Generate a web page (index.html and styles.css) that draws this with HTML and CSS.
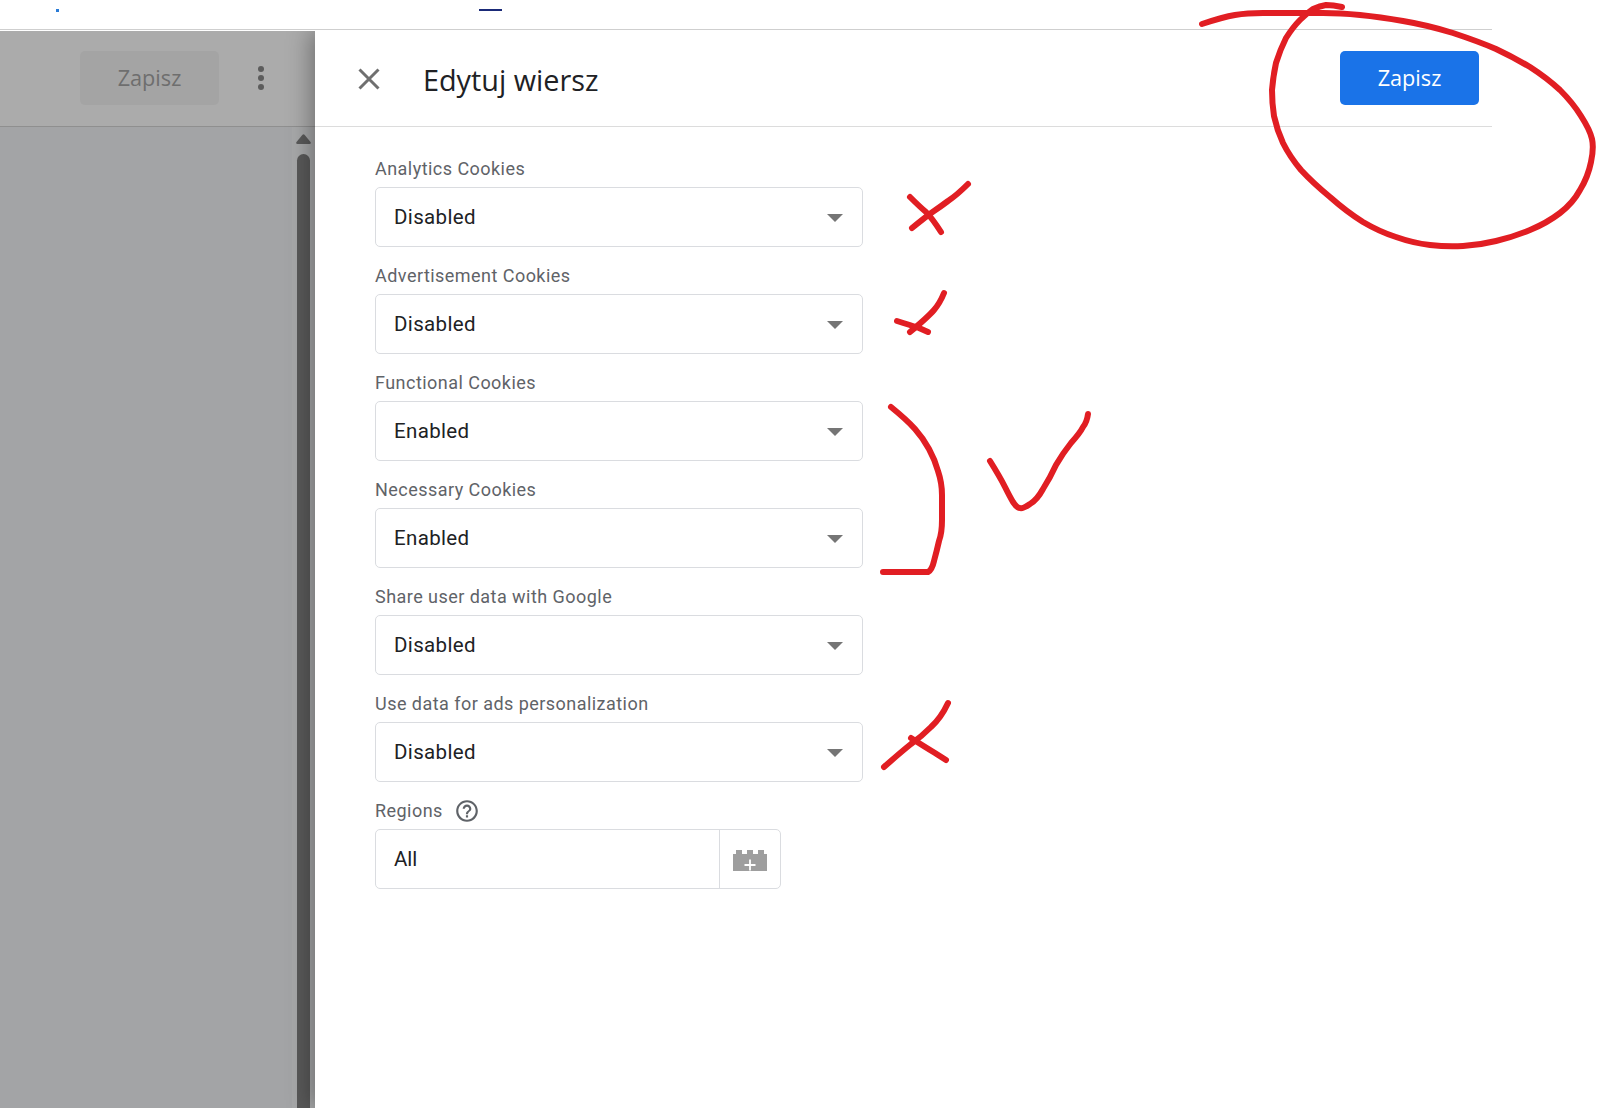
FILE: index.html
```html
<!DOCTYPE html>
<html lang="pl">
<head>
<meta charset="utf-8">
<title>Edytuj wiersz</title>
<link rel="stylesheet" href="styles.css">
</head>
<body>
<div class="page">
  <div class="topbar">
    <div class="topbar-inner">
      <span class="top-dot"></span>
      <span class="top-tab"></span>
    </div>
  </div>
  <div class="main">
    <div class="backdrop">
      <div class="backdrop-head">
        <div class="ghost-btn">Zapisz</div>
        <svg class="kebab" width="8" height="26" viewBox="0 0 8 26"><circle cx="4" cy="4" r="3" /><circle cx="4" cy="13" r="3" /><circle cx="4" cy="22" r="3" /></svg>
      </div>
      <div class="backdrop-body">
        <div class="scrollbar">
          <svg class="scroll-up" width="15" height="10" viewBox="0 0 15 10"><path d="M6.500 0.800 Q7.500 -0.200 8.500 0.800 L14.500 8 Q15.500 10 13.500 10 H1.500 Q-0.500 10 0.500 8 Z"/></svg>
          <div class="scroll-thumb"></div>
        </div>
      </div>
    </div>
    <div class="panel">
      <div class="panel-inner">
        <header class="panel-head">
          <svg class="close" width="22" height="22" viewBox="0 0 22 22"><path d="M1.500 1.500 L20.500 20.500 M20.500 1.500 L1.500 20.500"/></svg>
          <h1 class="title">Edytuj wiersz</h1>
          <button class="save-btn">Zapisz</button>
        </header>
        <div class="form">
          <div class="field">
            <div class="label">Analytics Cookies</div>
            <div class="select"><span>Disabled</span><i class="caret"></i></div>
          </div>
          <div class="field">
            <div class="label">Advertisement Cookies</div>
            <div class="select"><span>Disabled</span><i class="caret"></i></div>
          </div>
          <div class="field">
            <div class="label">Functional Cookies</div>
            <div class="select"><span>Enabled</span><i class="caret"></i></div>
          </div>
          <div class="field">
            <div class="label">Necessary Cookies</div>
            <div class="select"><span>Enabled</span><i class="caret"></i></div>
          </div>
          <div class="field">
            <div class="label">Share user data with Google</div>
            <div class="select"><span>Disabled</span><i class="caret"></i></div>
          </div>
          <div class="field">
            <div class="label">Use data for ads personalization</div>
            <div class="select"><span>Disabled</span><i class="caret"></i></div>
          </div>
          <div class="field">
            <div class="label">Regions
              <svg class="help" width="26" height="26" viewBox="0 0 24 24"><path d="M11 18h2v-2h-2v2zm1-16C6.480 2 2 6.480 2 12s4.480 10 10 10 10-4.480 10-10S17.520 2 12 2zm0 18c-4.410 0-8-3.590-8-8s3.590-8 8-8 8 3.590 8 8-3.590 8-8 8zm0-14c-2.210 0-4 1.790-4 4h2c0-1.100.9-2 2-2s2 .9 2 2c0 2-3 1.750-3 5h2c0-2.250 3-2.500 3-5 0-2.210-1.790-4-4-4z"/></svg>
            </div>
            <div class="regions">
              <div class="regions-value">All</div>
              <div class="regions-btn">
                <svg width="34" height="21" viewBox="0 0 34 21"><path class="lego" d="M0 21V4h3V0h6v4h5V0h6v4h5V0h6v4h3v17z"/><path class="lego-plus" d="M17 9.500v11M11.500 15h11"/></svg>
              </div>
            </div>
          </div>
        </div>
      </div>
    </div>
  </div>
  <svg class="ink" width="1598" height="1108" viewBox="0 0 1598 1108">
    <path d="M1202 24Q1223 17 1235 15Q1247 13 1263 13Q1280 13 1293 13Q1307 13 1323 13Q1340 13 1360 15Q1380 17 1403 21Q1427 25 1453 33Q1480 42 1496 49Q1513 57 1530 67Q1547 78 1560 90Q1573 103 1581 116Q1590 130 1592 139Q1594 148 1591 162Q1588 177 1580 190Q1573 203 1560 213Q1547 223 1530 230Q1513 237 1496 241Q1480 245 1463 246Q1447 247 1430 245Q1413 243 1396 237Q1380 232 1363 222Q1347 212 1330 197Q1313 183 1301 170Q1290 157 1283 143Q1277 130 1274 116Q1272 103 1272 90Q1273 77 1276 63Q1280 50 1286 38Q1293 27 1300 20Q1307 13 1313 9Q1320 6 1326 5Q1333 5 1342 7"/>
    <path d="M968 184Q957 195 948 201Q940 207 934 211Q928 215 912 228"/>
    <path d="M910 197Q920 207 926 212Q932 218 941 232"/>
    <path d="M944 293Q940 303 934 310Q928 317 910 332"/>
    <path d="M897 321Q910 325 919 328L928 332"/>
    <path d="M891 407Q907 420 915 429Q923 438 929 449Q935 460 938 471Q942 483 942 495Q942 507 942 520Q942 533 939 541Q937 550 934 561Q932 570 928 572L883 572"/>
    <path d="M990 461Q1000 477 1005 487Q1010 497 1013 502Q1017 508 1020 508Q1023 509 1030 504Q1037 500 1043 489Q1050 478 1056 465Q1063 453 1071 443Q1080 433 1083 427Q1087 422 1088 414"/>
    <path d="M948 703Q941 718 931 727Q921 737 911 744Q901 752 884 767"/>
    <path d="M911 738Q925 747 935 753L946 760"/>
  </svg>
</div>
</body>
</html>
```
FILE: styles.css
```css
* { box-sizing: border-box; }
html, body { margin: 0; padding: 0; }
body { background: #fff; font-family: Roboto, "Liberation Sans", sans-serif; }

.page { position: relative; width: 1598px; height: 1108px; overflow: hidden; display: flex; flex-direction: column; }

.topbar { height: 31px; flex: none; }
.topbar-inner { width: 1492px; height: 30px; border-bottom: 1px solid #cfcfcf; display: flex; align-items: flex-start; padding-top: 9px; }
.top-dot { width: 3px; height: 3px; background: #2a7bd6; margin-left: 56px; }
.top-tab { width: 23px; height: 2px; background: #1a2a78; margin-left: 420px; }

.main { flex: 1; display: flex; min-height: 0; overflow: hidden; }

.backdrop { width: 315px; flex: none; display: flex; flex-direction: column; background: #a3a4a6; }
.backdrop-head { height: 96px; flex: none; background: #ababab; border-bottom: 1px solid #8f8f8f; display: flex; align-items: center; padding: 0 0 2px 80px; gap: 38px; }
.ghost-btn { width: 139px; height: 54px; border-radius: 5px; background: #a4a4a4; color: #6e6e6e; font: 500 21.700px "Open Sans", sans-serif; display: flex; align-items: center; justify-content: center; }
.kebab { fill: #5c5c5c; }
.backdrop-body { flex: 1; display: flex; justify-content: flex-end; min-height: 0; }
.scrollbar { width: 23px; padding: 7px 5px 0 4px; background: #a7a8a9; display: flex; flex-direction: column; align-items: center; gap: 10px; }
.scroll-up { fill: #5a5a5a; flex: none; }
.scroll-thumb { width: 13px; flex: 1; background: #595959; border-radius: 7px 7px 0 0; }

.panel { flex: 1; background: #fff; position: relative; box-shadow: -4px 0 22px rgba(0,0,0,.35); }
.panel-inner { width: 1177px; }
.panel-head { height: 96px; border-bottom: 1px solid #dcdcdc; display: flex; align-items: center; padding: 0 13px 2px 43px; }
.close { flex: none; stroke: #6f6f6f; stroke-width: 3; fill: none; margin-top: 2px; }
.title { margin: 4px 0 0 43px; flex: 1; font: 400 28.800px "Open Sans", sans-serif; color: #202124; }
.save-btn { width: 139px; height: 54px; border: 0; border-radius: 5px; background: #1a73e8; color: #fff; font: 500 21.700px "Open Sans", sans-serif; padding: 0; }

.form { padding: 31px 0 0 60px; display: flex; flex-direction: column; gap: 18px; }
.label { height: 22px; line-height: 22px; margin-bottom: 7px; font-size: 18px; letter-spacing: .46px; color: #5f6368; display: flex; align-items: center; gap: 11px; }
.select { width: 488px; height: 60px; border: 1px solid #dadce0; border-radius: 5px; display: flex; align-items: center; justify-content: space-between; padding: 0 19px 0 18px; font-size: 20.500px; letter-spacing: .35px; color: #202124; }
.caret { width: 0; height: 0; border-left: 8px solid transparent; border-right: 8px solid transparent; border-top: 8px solid #757575; margin-top: 1px; }
.help { fill: #5f6368; flex: none; }
.regions { width: 406px; height: 60px; border: 1px solid #dadce0; border-radius: 5px; display: flex; font-size: 20.500px; color: #202124; }
.regions-value { flex: 1; display: flex; align-items: center; padding-left: 18px; }
.regions-btn { width: 61px; border-left: 1px solid #dadce0; display: flex; align-items: center; justify-content: center; padding-top: 2px; }
.lego { fill: #9e9e9e; }
.lego-plus { stroke: #fff; stroke-width: 1.800; fill: none; }

.ink { position: absolute; left: 0; top: 0; pointer-events: none; }
.ink path { fill: none; stroke: #e11e23; stroke-width: 6; stroke-linecap: round; stroke-linejoin: round; }
```
